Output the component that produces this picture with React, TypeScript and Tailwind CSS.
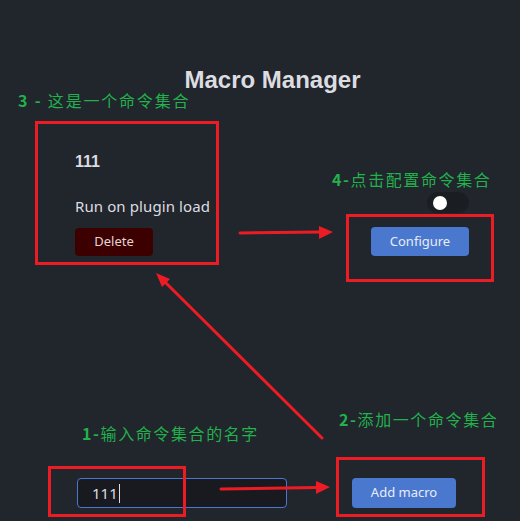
import React from "react";

const RED = "#ED1C24";

function Annotations() {
  return (
    <>
      {/* red boxes */}
      <div className="absolute left-[35px] top-[121px] w-[184px] h-[144px] border-[3px] border-[#ED1C24] pointer-events-none" />
      <div className="absolute left-[346px] top-[214px] w-[148px] h-[68px] border-[3px] border-[#ED1C24] pointer-events-none" />
      <div className="absolute left-[48px] top-[466px] w-[138px] h-[51px] border-[3px] border-[#ED1C24] pointer-events-none" />
      <div className="absolute left-[336px] top-[457px] w-[149px] h-[60px] border-[3px] border-[#ED1C24] pointer-events-none" />

      {/* arrows */}
      <svg className="absolute inset-0 pointer-events-none" width={520} height={521} viewBox="0 0 520 521">
        <g stroke={RED} strokeWidth={3} strokeLinecap="round" fill="none">
          <line x1={240} y1={233} x2={321} y2={232} />
          <line x1={322} y1={438} x2={164} y2={281} />
          <line x1={221} y1={489} x2={317} y2={487.5} />
        </g>
        <g fill={RED}>
          <polygon points="333,232 319,226 319,239" />
          <polygon points="156,273 170,279 162,287" />
          <polygon points="330,487 316,481 316,494" />
        </g>
      </svg>

      {/* green labels */}
      <div className="absolute left-[18px] top-[91px] text-[16px] leading-[18px] text-[#22B14C] tracking-[1.8px] whitespace-nowrap font-['Noto_Sans_CJK_SC',sans-serif]">
        <span className="font-bold">3 - </span>这是一个命令集合
      </div>
      <div className="absolute left-[332px] top-[170px] text-[16px] leading-[18px] text-[#22B14C] tracking-[1.6px] whitespace-nowrap font-['Noto_Sans_CJK_SC',sans-serif]">
        <span className="font-bold">4-</span>点击配置命令集合
      </div>
      <div className="absolute left-[82px] top-[424px] text-[16px] leading-[18px] text-[#22B14C] tracking-[1.6px] whitespace-nowrap font-['Noto_Sans_CJK_SC',sans-serif]">
        <span className="font-bold">1-</span>输入命令集合的名字
      </div>
      <div className="absolute left-[339px] top-[410px] text-[16px] leading-[18px] text-[#22B14C] tracking-[1.6px] whitespace-nowrap font-['Noto_Sans_CJK_SC',sans-serif]">
        <span className="font-bold">2-</span>添加一个命令集合
      </div>
    </>
  );
}

export default function App() {
  return (
    <div className="relative w-[520px] h-[521px] overflow-hidden bg-[#21252c] text-[#dcdde0] font-['Noto_Sans',sans-serif]">
      <div className="flex flex-col pt-[65px]">
        <h1 className="pl-[25px] text-center text-[24px] leading-[29px] font-bold font-['Liberation_Sans',sans-serif] text-[#dcdde0]">
          Macro Manager
        </h1>

        <div className="mt-[56px] flex items-end justify-between pl-[75px] pr-[51px]">
          <div className="flex flex-col items-start">
            <div className="text-[16px] leading-[24px] font-bold font-['Liberation_Sans',sans-serif]">111</div>
            <div className="mt-[20px] text-[15px] leading-[24px] tracking-[0.1px]">Run on plugin load</div>
            <button className="mt-[10px] w-[78px] h-[28px] rounded-[4px] bg-[#3d0000] text-[13px] text-[#e2d6d6]">
              Delete
            </button>
          </div>
          <div className="flex flex-col items-end">
            <div className="w-[42px] h-[21px] rounded-full bg-[#1a1d22] flex items-center pl-[6px]">
              <div className="w-[14px] h-[14px] rounded-full bg-white" />
            </div>
            <button className="mt-[14px] w-[98px] h-[29px] rounded-[4px] bg-[#4a78cf] text-[13px] text-[#e8ecf5]">
              Configure
            </button>
          </div>
        </div>

        <div className="mt-[222px] flex items-center pl-[77px] gap-[65px]">
          <div
            role="textbox"
            className="w-[210px] h-[30px] rounded-[4px] border border-[#4a78cf] bg-[#181a1f] flex items-center pl-[14px] text-[15px] text-[#dcdde0]"
          >
            <span>111</span>
            <span className="ml-px w-px h-[19px] bg-[#dcdde0]" />
          </div>
          <button className="w-[104px] h-[30px] rounded-[4px] bg-[#4a78cf] text-[13px] text-[#e8ecf5]">
            Add macro
          </button>
        </div>
      </div>

      <Annotations />
    </div>
  );
}
